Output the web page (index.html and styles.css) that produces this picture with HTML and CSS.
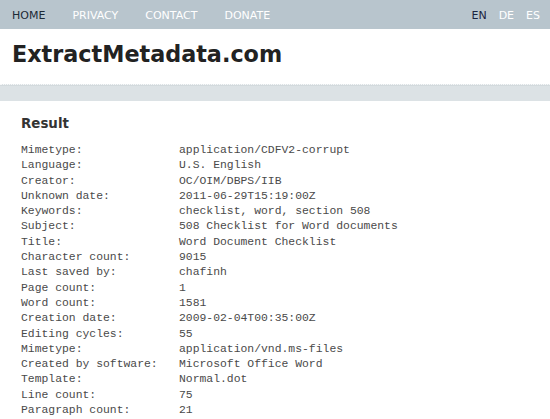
FILE: index.html
```html
<!DOCTYPE html>
<html lang="en">
<head>
<meta charset="utf-8">
<title>ExtractMetadata.com</title>
<link rel="stylesheet" href="styles.css">
</head>
<body>
<nav class="topnav">
  <ul class="menu">
    <li><a class="active" href="#">HOME</a></li>
    <li><a href="#">PRIVACY</a></li>
    <li><a href="#">CONTACT</a></li>
    <li><a href="#">DONATE</a></li>
  </ul>
  <ul class="langs">
    <li><a class="active" href="#">EN</a></li>
    <li><a href="#">DE</a></li>
    <li><a href="#">ES</a></li>
  </ul>
</nav>
<header class="masthead">
  <h1 class="logo">ExtractMetadata.com</h1>
</header>
<div class="band"></div>
<main class="content">
  <h2 class="result-title">Result</h2>
  <dl class="meta">
    <dt>Mimetype:</dt><dd>application/CDFV2-corrupt</dd>
    <dt>Language:</dt><dd>U.S. English</dd>
    <dt>Creator:</dt><dd>OC/OIM/DBPS/IIB</dd>
    <dt>Unknown date:</dt><dd>2011-06-29T15:19:00Z</dd>
    <dt>Keywords:</dt><dd>checklist, word, section 508</dd>
    <dt>Subject:</dt><dd>508 Checklist for Word documents</dd>
    <dt>Title:</dt><dd>Word Document Checklist</dd>
    <dt>Character count:</dt><dd>9015</dd>
    <dt>Last saved by:</dt><dd>chafinh</dd>
    <dt>Page count:</dt><dd>1</dd>
    <dt>Word count:</dt><dd>1581</dd>
    <dt>Creation date:</dt><dd>2009-02-04T00:35:00Z</dd>
    <dt>Editing cycles:</dt><dd>55</dd>
    <dt>Mimetype:</dt><dd>application/vnd.ms-files</dd>
    <dt>Created by software:</dt><dd>Microsoft Office Word</dd>
    <dt>Template:</dt><dd>Normal.dot</dd>
    <dt>Line count:</dt><dd>75</dd>
    <dt>Paragraph count:</dt><dd>21</dd>
  </dl>
</main>
</body>
</html>
```

FILE: styles.css
```css
html, body {
  margin: 0;
  padding: 0;
  background: #ffffff;
}

body {
  font-family: "DejaVu Sans", Verdana, sans-serif;
  overflow: hidden;
}

.topnav {
  display: flex;
  justify-content: space-between;
  align-items: center;
  height: 29px;
  background: #b8c5cd;
  padding: 2px 10px 0 12px;
  box-sizing: border-box;
}

.menu, .langs {
  list-style: none;
  margin: 0;
  padding: 0;
  display: flex;
}

.menu { gap: 27px; }
.langs { gap: 12px; }

.menu a, .langs a {
  font-size: 11px;
  line-height: 27px;
  color: #ffffff;
  text-decoration: none;
  display: block;
}

.menu a.active { color: #1d2a36; }
.langs a.active { color: #1a2340; }

.masthead {
  height: 55px;
  display: flex;
  align-items: center;
  padding: 0 12px 5px 12px;
  box-sizing: border-box;
}

.logo {
  margin: 0;
  font-size: 22.3px;
  font-weight: bold;
  color: #222222;
}

.band {
  height: 16px;
  background: #dce2e5;
  border-top: 1px dotted #f7f8f9;
  box-shadow: inset 0 1px 0 #d3dadd;
}

.content {
  padding: 15px 21px 0 21px;
}

.result-title {
  margin: 0 0 12px 0;
  font-size: 13.4px;
  font-weight: bold;
  color: #333333;
}

.meta {
  margin: 0;
  display: grid;
  grid-template-columns: 158px 1fr;
  font-family: "Liberation Mono", "Courier New", monospace;
  font-size: 11.4px;
  line-height: 15.3px;
  color: #4a4a4a;
}

.meta dt, .meta dd {
  margin: 0;
  white-space: nowrap;
}
```
